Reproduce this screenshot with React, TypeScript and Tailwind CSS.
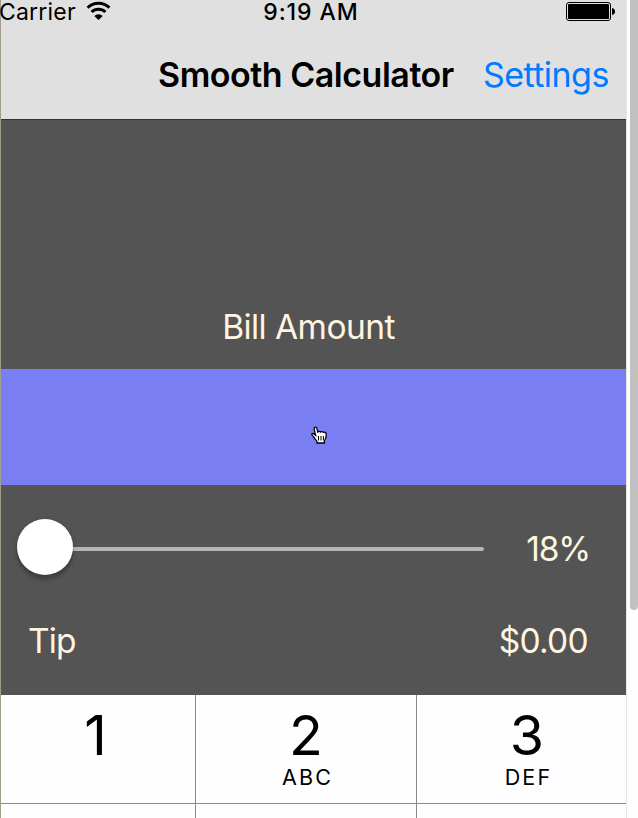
const Wifi = () => (
  <svg width="26" height="20" viewBox="0 0 26 20" fill="none" stroke="#000" strokeWidth="3">
    <path d="M1.6 7.7 A15.4 15.4 0 0 1 23.4 7.7" />
    <path d="M5.6 12 A10 10 0 0 1 19.4 12" />
    <path d="M8.3 15.9 A6 6 0 0 1 16.7 15.9 L12.5 20 Z" fill="#000" stroke="none" />
  </svg>
);

const Battery = () => (
  <svg width="50" height="19" viewBox="0 0 50 19">
    <rect x="0.5" y="0.5" width="44" height="18" rx="2.5" fill="none" stroke="#000" />
    <rect x="2" y="2" width="41" height="15" rx="1" fill="#000" />
    <path d="M46 6 q3 0.5 3 3.5 q0 3 -3 3.5 Z" fill="#000" />
  </svg>
);

const Hand = () => (
  <svg className="absolute left-[310px] top-[57px]" width="17" height="19" viewBox="0 0 17 19">
    <path
      d="M3.6 1.6 C4.6 0.7 5.6 1.4 5.9 2.6 L6.8 6 C7.8 5.1 9 5.2 9.6 6 C10.6 5.3 11.8 5.5 12.3 6.3 C13.7 5.8 15 6.4 15.2 7.8 C15.4 11 14.8 13 13.4 15 V17 H6 V15.4 C4.8 14 3.8 12.8 3 11.4 L1 9 C0.4 7.8 1.6 7 2.7 7.7 L4.6 9.3 L3.3 3.8 C3.1 2.7 3.1 2.1 3.6 1.6 Z"
      fill="#fff"
      stroke="#000"
      strokeWidth="1.3"
    />
    <path d="M7.5 10v4.5M10 10v4.5M12.4 10v4.5" stroke="#000" strokeWidth="1" />
  </svg>
);

const Key = ({ digit, letters, shift = "" }: { digit: string; letters: string; shift?: string }) => (
  <div className={`flex flex-col items-center bg-[#fefefe] pt-[7px] ${shift}`}>
    <span className="h-[63px] text-[55.5px] leading-[65px]">{digit}</span>
    <span className="pl-[3px] text-[21.5px] leading-[24px] tracking-[2.2px]">{letters}</span>
  </div>
);

export default function App() {
  return (
    <div className="flex h-[818px] w-[638px] overflow-hidden bg-[#fefefe] font-['Inter',sans-serif] text-black">
      <main className="flex w-[627px] shrink-0 flex-col border-r border-l border-r-[#e6e6e6] border-l-[#a09c8e]">
        <header className="h-[120px] border-b border-[#353535] bg-[#e0e0e0] whitespace-nowrap">
          <div className="grid h-6 grid-cols-3 text-[23px] leading-6">
            <div className="-ml-[2px] flex">
              <span className="w-[77px] tracking-[0.2px]">Carrier</span>
              <span className="ml-[10px]"><Wifi /></span>
            </div>
            <span className="pr-[5px] text-center font-medium tracking-[0.95px]">9:19 AM</span>
            <div className="flex justify-end pt-[2px] pr-[10px]"><Battery /></div>
          </div>
          <div className="flex justify-end pt-[31px] pr-[17px] text-[34px] leading-10">
            <h1 className="w-[325px] font-semibold tracking-[-0.48px]">Smooth Calculator</h1>
            <button className="w-[126px] text-left tracking-[-0.55px] text-[#007aff]">Settings</button>
          </div>
        </header>
        <section className="flex h-[575px] flex-col bg-[#545454] text-[33.5px] leading-10 text-[#fff5e1]">
          <div className="pt-[187px] pr-[10px] text-center tracking-[-0.55px]">Bill Amount</div>
          <div className="relative mt-[22px] h-[116px] shrink-0 bg-[#797ef2]"><Hand /></div>
          <div className="flex h-[126px] items-center pt-[2px] pr-[37px] pl-[16px]">
            <div className="flex w-[467px] items-center">
              <div className="z-10 mt-[-5px] size-14 rounded-full bg-white shadow-[0_6px_3px_rgba(0,0,0,0.15),0_1px_4px_rgba(0,0,0,0.25)]" />
              <div className="-ml-1 h-1 flex-1 rounded-full bg-[#b6b6b6]" />
            </div>
            <span className="-mr-[1px] flex-1 text-right tracking-[-1.2px]">18%</span>
          </div>
          <div className="flex justify-between pt-[10px] pr-[38px] pl-[27px]">
            <span className="tracking-[-0.9px]">Tip</span>
            <span className="tracking-[-0.7px]">$0.00</span>
          </div>
        </section>
        <section className="grid flex-1 grid-cols-[194px_220px_209px] grid-rows-[108px_14px] gap-px bg-[#8a8a8a]">
          <Key digit="1" letters="" shift="pr-[5px]" />
          <Key digit="2" letters="ABC" />
          <Key digit="3" letters="DEF" shift="pl-[11px]" />
          <div className="bg-[#fefefe]" />
          <div className="bg-[#fefefe]" />
          <div className="bg-[#fefefe]" />
        </section>
      </main>
      <div className="ml-[3px] h-[610px] w-2 rounded-b-full bg-[#c1c1c1]" />
    </div>
  );
}
